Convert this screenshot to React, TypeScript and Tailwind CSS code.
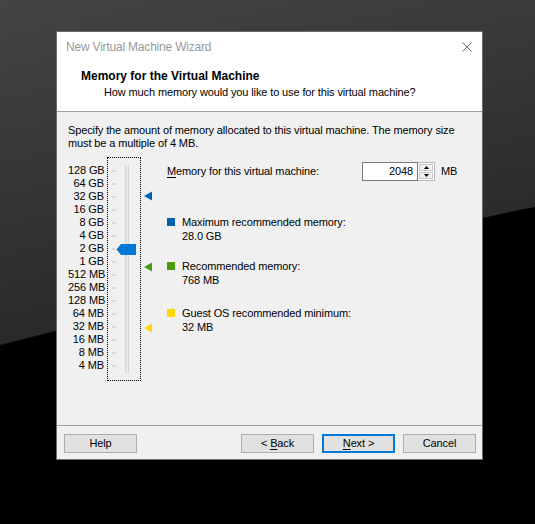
import React from 'react';

const scaleLabels = [
  '128 GB', '64 GB', '32 GB', '16 GB', '8 GB', '4 GB', '2 GB', '1 GB',
  '512 MB', '256 MB', '128 MB', '64 MB', '32 MB', '16 MB', '8 MB', '4 MB',
];

const Wallpaper: React.FC = () => (
  <svg className="absolute inset-0" width="535" height="524" viewBox="0 0 535 524">
    <defs>
      <linearGradient id="wall" x1="0" y1="0" x2="0.35" y2="1">
        <stop offset="0" stopColor="#444444" />
        <stop offset="0.55" stopColor="#343434" />
        <stop offset="1" stopColor="#262626" />
      </linearGradient>
    </defs>
    <rect width="535" height="524" fill="#000" />
    <path d="M0 0 H535 V207 C 420 228, 220 290, 0 345 Z" fill="url(#wall)" />
  </svg>
);

const Slider: React.FC = () => (
  <svg width="32" height="222" viewBox="0 0 32 222">
    {scaleLabels.map((_, i) => (
      <rect key={i} x="4" y={12.5 + 13 * i} width="4" height="1" fill="#c4c4c4" />
    ))}
    <rect x="17" y="7" width="4" height="208" fill="#e6e6e6" />
    <rect x="17" y="7" width="1" height="208" fill="#d4d4d4" />
    <rect x="20" y="7" width="1" height="208" fill="#d4d4d4" />
    <polygon points="13,86 28,86 28,97 13,97 8.5,91.5" fill="#0078d7" />
  </svg>
);

const Markers: React.FC = () => (
  <svg width="20" height="224" viewBox="0 0 20 224">
    <polygon points="3,39 11,34.5 11,43.5" fill="#0063b1" />
    <polygon points="3,110 11,105.5 11,114.5" fill="#4a9a0c" />
    <polygon points="3,171 11,166.5 11,175.5" fill="#ffd800" />
  </svg>
);

const Legend: React.FC<{ color: string; title: string; value: string; className: string }> = ({ color, title, value, className }) => (
  <div className={`flex items-start ${className}`}>
    <div className="w-[8px] h-[8px] mt-[3px] shrink-0" style={{ backgroundColor: color }} />
    <div className="ml-[7px] leading-[14px]">
      <div>{title}</div>
      <div>{value}</div>
    </div>
  </div>
);

const WinButton: React.FC<{ children: React.ReactNode; primary?: boolean; className?: string }> = ({ children, primary, className = '' }) => (
  <div
    className={`w-[73px] h-[19px] flex items-center justify-center bg-[#e1e1e1] text-black ${
      primary ? 'border-2 border-[#0078d7]' : 'border border-[#adadad]'
    } ${className}`}
  >
    {children}
  </div>
);

const App: React.FC = () => {
  return (
    <div className="relative w-[535px] h-[524px] overflow-hidden bg-black pt-[31px] pl-[56px] font-['Liberation_Sans',Arial,sans-serif] text-[11px] tracking-[-0.12px] text-black">
      <Wallpaper />

      <div className="relative w-[427px] border border-[#6b6b6b] bg-[#f0f0f0]">
        {/* title bar */}
        <div className="h-[30px] bg-white flex items-center pl-[9px] pr-[10px]">
          <span className="text-[#999999] text-[12px] tracking-[-0.2px]">New Virtual Machine Wizard</span>
          <svg className="ml-auto" width="10" height="10" viewBox="0 0 10 10">
            <path d="M0.5 0.5 L9.5 9.5 M9.5 0.5 L0.5 9.5" stroke="#6f6f6f" strokeWidth="1" />
          </svg>
        </div>

        {/* header */}
        <div className="h-[50px] bg-white border-b border-[#a0a0a0] pt-[6px] pl-[24px] leading-[16px]">
          <div className="font-bold text-[12px] tracking-normal">Memory for the Virtual Machine</div>
          <div className="ml-[23px]">How much memory would you like to use for this virtual machine?</div>
        </div>

        {/* body */}
        <div className="h-[313px] pt-[12px] pl-[11px]">
          <p className="leading-[13px] whitespace-nowrap">
            Specify the amount of memory allocated to this virtual machine. The memory size
            <br />
            must be a multiple of 4 MB.
          </p>

          <div className="flex mt-[7px]">
            <div className="w-[36px] pt-[7px] text-right">
              {scaleLabels.map(l => (
                <div key={l} className="h-[13px] leading-[13px] whitespace-nowrap">{l}</div>
              ))}
            </div>
            <div className="ml-[3px] w-[34px] h-[224px] border border-dotted border-black">
              <Slider />
            </div>
            <Markers />

            <div className="ml-[6px] pt-[5px]">
              <div className="flex items-center h-[19px]">
                <div className="w-[195px]">
                  <span className="underline underline-offset-2">M</span>emory for this virtual machine:
                </div>
                <div className="w-[56px] h-[19px] border border-[#7a7a7a] bg-white flex items-center justify-end pr-[4px]">
                  2048
                </div>
                <div className="w-[17px] h-[19px] flex flex-col border-y border-r border-[#b9b9b9] bg-white p-[1px] gap-[1px]">
                  <div className="flex-1 bg-[#f0f0f0] border border-[#c8c8c8] flex items-center justify-center">
                    <svg width="5" height="3" viewBox="0 0 5 3"><polygon points="2.5,0 5,3 0,3" fill="#000" /></svg>
                  </div>
                  <div className="flex-1 bg-[#f0f0f0] border border-[#c8c8c8] flex items-center justify-center">
                    <svg width="5" height="3" viewBox="0 0 5 3"><polygon points="0,0 5,0 2.5,3" fill="#000" /></svg>
                  </div>
                </div>
                <span className="ml-[6px]">MB</span>
              </div>

              <Legend className="mt-[34px]" color="#0063b1" title="Maximum recommended memory:" value="28.0 GB" />
              <Legend className="mt-[16px]" color="#4a9a0c" title="Recommended memory:" value="768 MB" />
              <Legend className="mt-[19px]" color="#ffd800" title="Guest OS recommended minimum:" value="32 MB" />
            </div>
          </div>
        </div>

        {/* footer */}
        <div className="h-[34px] border-t border-[#a0a0a0] pt-[8px] pl-[7px] flex items-start">
          <WinButton>Help</WinButton>
          <WinButton className="ml-[104px]">
            &lt;&nbsp;<span className="underline underline-offset-2">B</span>ack
          </WinButton>
          <WinButton primary className="ml-[8px]">
            <span className="underline underline-offset-2">N</span>ext &gt;
          </WinButton>
          <WinButton className="ml-[8px]">Cancel</WinButton>
        </div>
      </div>
    </div>
  );
};

export default App;
